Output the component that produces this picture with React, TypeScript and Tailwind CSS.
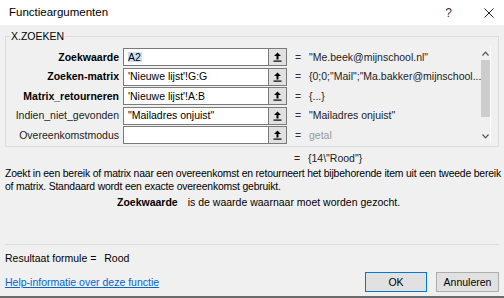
import React from 'react';

const rows = [
  { label: 'Zoekwaarde', bold: true, input: 'A2', value: '"Me.beek@mijnschool.nl"', dim: false },
  { label: 'Zoeken-matrix', bold: true, input: "'Nieuwe lijst'!G:G", value: '{0;0;"Mail";"Ma.bakker@mijnschool...', dim: false },
  { label: 'Matrix_retourneren', bold: true, input: "'Nieuwe lijst'!A:B", value: '{...}', dim: false },
  { label: 'Indien_niet_gevonden', bold: false, input: '"Mailadres onjuist"', value: '"Mailadres onjuist"', dim: false },
  { label: 'Overeenkomstmodus', bold: false, input: '', value: 'getal', dim: true },
];

const RefIcon: React.FC = () => (
  <svg width="9" height="10" viewBox="0 0 9 10">
    <path d="M4.5 0.5 L8 4 L5.5 4 L5.5 7.5 L3.5 7.5 L3.5 4 L1 4 Z" fill="#000" />
    <rect x="0.5" y="8.5" width="8" height="1.2" fill="#000" />
  </svg>
);

const App: React.FC = () => {
  return (
    <div className="w-[504px] h-[298px] bg-[#f0f0f0] flex flex-col overflow-hidden text-[10.5px] text-[#1a1a1a] font-['Liberation_Sans',Arial,sans-serif] leading-none">
      {/* titelbalk */}
      <div className="h-[25px] bg-white flex items-center pl-[9px] pr-[10px] shrink-0">
        <span className="text-[11.5px] text-black">Functieargumenten</span>
        <span className="ml-auto text-[12px] text-[#333] mr-[32px]">?</span>
        <svg width="10" height="10" viewBox="0 0 10 10">
          <path d="M0.5 0.5 L9.5 9.5 M9.5 0.5 L0.5 9.5" stroke="#222" strokeWidth="1" />
        </svg>
      </div>

      <div className="px-[5px] flex flex-col">
        {/* groep */}
        <div className="relative mt-[11px] border border-[#dcdcdc] h-[111px] flex pt-[11px]">
          <span className="absolute -top-[6px] left-[4px] px-[1px] bg-[#f0f0f0] text-black">X.ZOEKEN</span>
          <div className="flex-1 flex flex-col gap-[1.5px]">
            {rows.map((r) => (
              <div key={r.label} className="flex items-center h-[18px]">
                <div className={`w-[117px] text-right pr-[4px] ${r.bold ? 'font-bold text-black' : 'text-[#222]'}`}>
                  {r.label}
                </div>
                <div className="w-[145px] h-[18px] bg-white border border-[#7a7a7a] border-r-0 flex items-center pl-[4px] text-black">
                  {r.input === 'A2' ? (
                    <span className="bg-[#cde0f7] pr-[1px]">A2</span>
                  ) : (
                    r.input
                  )}
                </div>
                <div className="w-[19px] h-[18px] bg-[#e1e1e1] border border-[#7a7a7a] flex items-center justify-center">
                  <RefIcon />
                </div>
                <div className="w-[22px] text-center text-[#333]">=</div>
                <div className={`whitespace-nowrap ${r.dim ? 'text-[#9a9a9a]' : 'text-[#222]'}`}>{r.value}</div>
              </div>
            ))}
          </div>
          {/* scrollbalk */}
          <div className="w-[12px] mr-[7px] -mt-[1px] mb-[3px] bg-[#f0f0f0] border-r border-white flex flex-col items-center">
            <div className="h-[13px] flex items-center justify-center">
              <svg width="7" height="5" viewBox="0 0 7 5">
                <path d="M0.5 4.5 L3.5 1.2 L6.5 4.5" stroke="#555" strokeWidth="1.2" fill="none" />
              </svg>
            </div>
            <div className="w-full h-[57px] bg-[#cdcdcd]" />
            <div className="flex-1" />
            <div className="h-[13px] flex items-center justify-center">
              <svg width="7" height="5" viewBox="0 0 7 5">
                <path d="M0.5 0.5 L3.5 3.8 L6.5 0.5" stroke="#555" strokeWidth="1.2" fill="none" />
              </svg>
            </div>
          </div>
        </div>

        <div className="flex mt-[5px] h-[12px] items-center text-[#222]">
          <span className="ml-[281px] w-[22px] text-center">=</span>
          <span>{'{14\\"Rood"}'}</span>
        </div>

        <div className="mt-[4px] -mr-[4px] leading-[12.5px] text-[10.4px] tracking-[-0.18px] text-black">
          Zoekt in een bereik of matrix naar een overeenkomst en retourneert het bijbehorende item uit een tweede bereik of matrix. Standaard wordt een exacte overeenkomst gebruikt.
        </div>

        <div className="mt-[4px] pl-[112px] text-black">
          <span className="font-bold">Zoekwaarde</span>
          <span className="ml-[10px]">is de waarde waarnaar moet worden gezocht.</span>
        </div>

        <div className="mt-[36px] border-t border-[#dcdcdc]" />

        <div className="mt-[8px] text-black">
          Resultaat formule = <span className="ml-[5px]">Rood</span>
        </div>

        <div className="flex items-center mt-[9px]">
          <span className="text-[#0066cc] underline">Help-informatie over deze functie</span>
          <button className="ml-auto w-[62px] h-[20px] bg-[#e1e1e1] border border-[#0078d7] text-black">OK</button>
          <button className="ml-[9px] w-[63px] h-[20px] bg-[#e1e1e1] border border-[#adadad] text-black">Annuleren</button>
        </div>
      </div>
      <div className="mt-auto h-[2px] bg-[#6b6b6b]" />
    </div>
  );
};

export default App;
